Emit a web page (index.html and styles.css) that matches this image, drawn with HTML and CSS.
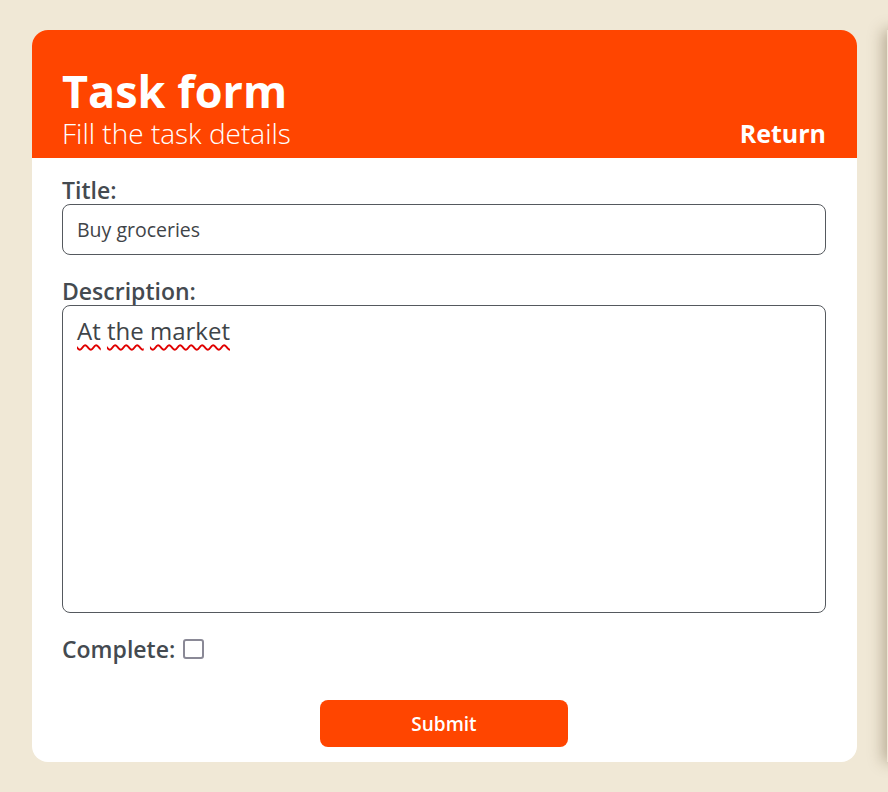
FILE: index.html
```html
<!DOCTYPE html>
<html lang="en">
<head>
<meta charset="utf-8">
<title>Task form</title>
<link rel="stylesheet" href="styles.css">
</head>
<body>
<div class="page">
  <div class="card">
    <header class="card-header">
      <div class="header-text">
        <h1 class="title">Task form</h1>
        <p class="subtitle">Fill the task details</p>
      </div>
      <a class="return" href="#">Return</a>
    </header>
    <form class="form">
      <label class="label" for="title">Title:</label>
      <input class="input" id="title" type="text" value="Buy groceries">
      <label class="label label-desc">Description:</label>
      <div class="textarea"><span class="miss">At</span> <span class="miss">the</span> <span class="miss">market</span></div>
      <div class="complete-row">
        <span class="label label-inline">Complete:</span>
        <span class="checkbox"></span>
      </div>
      <div class="actions">
        <button class="submit" type="button">Submit</button>
      </div>
    </form>
  </div>
  <div class="next-card"></div>
</div>
</body>
</html>
```
FILE: styles.css
```css
* { box-sizing: border-box; }
html, body { margin: 0; padding: 0; }
body {
  background: #f0e8d6;
  font-family: "Open Sans", "Noto Sans", sans-serif;
  width: 888px;
  height: 792px;
  overflow: hidden;
}
.page {
  display: flex;
  padding: 30px 0 0 32px;
  gap: 30px;
}
.card {
  flex: 0 0 825px;
  height: 732px;
  background: #ffffff;
  border-radius: 16px;
  overflow: hidden;
}
.next-card {
  flex: 0 0 200px;
  height: 732px;
  background: #f0e8d6;
  box-shadow: -4px 0 14px rgba(80, 60, 30, 0.35);
}
.card-header {
  background: #ff4500;
  height: 128px;
  padding: 0 31px 0 30px;
  display: flex;
  justify-content: space-between;
  align-items: flex-end;
  color: #ffffff;
}
.header-text { padding-bottom: 9px; }
.title {
  margin: 0 0 2px;
  font-size: 45px;
  font-weight: 700;
  line-height: 48px;
}
.subtitle {
  margin: 0;
  font-size: 28px;
  font-weight: 300;
  line-height: 32px;
}
.return {
  color: #ffffff;
  text-decoration: none;
  font-size: 25px;
  font-weight: 700;
  line-height: 32px;
  padding-bottom: 9px;
}
.form {
  display: flex;
  flex-direction: column;
  padding: 18px 31px 0 30px;
}
.label {
  font-size: 23px;
  font-weight: 600;
  color: #444a50;
  line-height: 28px;
}
.label-desc { margin-top: 22px; }
.input {
  height: 51px;
  border: 1px solid #55595e;
  border-radius: 8px;
  padding: 0 14px;
  font-family: inherit;
  font-size: 19.5px;
  color: #3f4448;
  outline: none;
}
.textarea {
  height: 308px;
  border: 1px solid #55595e;
  border-radius: 8px;
  padding: 10px 14px;
  font-size: 24px;
  line-height: 30px;
  color: #3f4448;
}
.miss {
  text-decoration: underline wavy #e00000;
  text-decoration-thickness: 1.5px;
  text-underline-offset: 4px;
}
.complete-row {
  display: flex;
  align-items: center;
  gap: 8px;
  margin-top: 22px;
}
.checkbox {
  width: 21px;
  height: 20px;
  border: 2px solid #8a8996;
  border-radius: 3px;
  background: #ffffff;
}
.actions {
  display: flex;
  justify-content: center;
  margin-top: 37px;
}
.submit {
  width: 248px;
  height: 47px;
  background: #ff4500;
  color: #ffffff;
  border: none;
  border-radius: 8px;
  font-family: inherit;
  font-size: 19px;
  font-weight: 600;
}
```
